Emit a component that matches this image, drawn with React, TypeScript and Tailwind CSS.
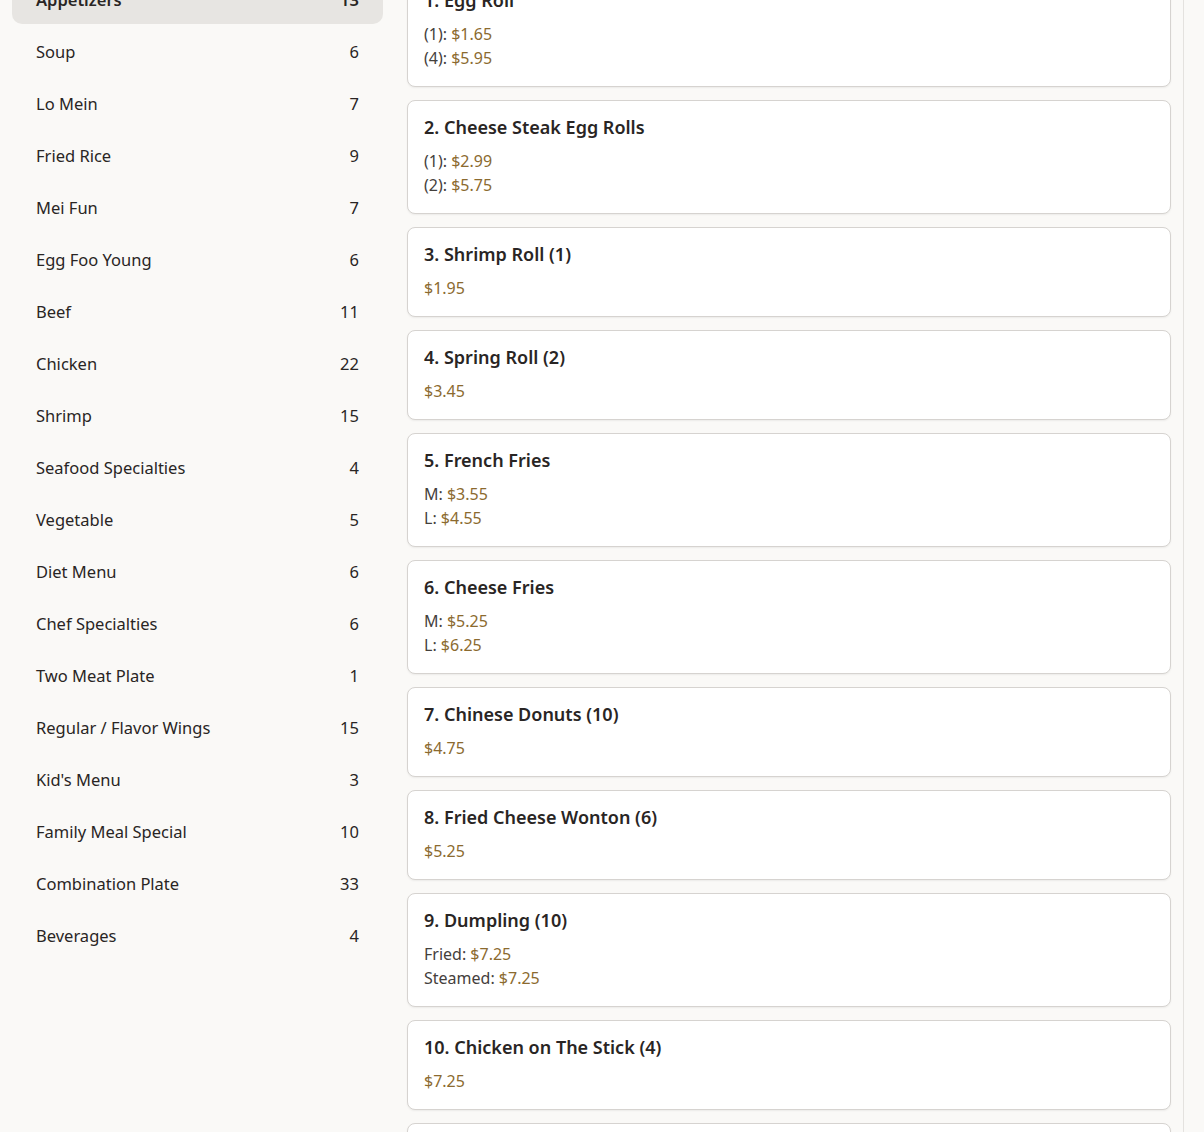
import React from 'react';

interface Category {
  name: string;
  count: number;
}

interface Price {
  label?: string;
  value: string;
}

interface MenuItem {
  title: string;
  prices: Price[];
}

const categories: Category[] = [
  { name: 'Appetizers', count: 13 },
  { name: 'Soup', count: 6 },
  { name: 'Lo Mein', count: 7 },
  { name: 'Fried Rice', count: 9 },
  { name: 'Mei Fun', count: 7 },
  { name: 'Egg Foo Young', count: 6 },
  { name: 'Beef', count: 11 },
  { name: 'Chicken', count: 22 },
  { name: 'Shrimp', count: 15 },
  { name: 'Seafood Specialties', count: 4 },
  { name: 'Vegetable', count: 5 },
  { name: 'Diet Menu', count: 6 },
  { name: 'Chef Specialties', count: 6 },
  { name: 'Two Meat Plate', count: 1 },
  { name: 'Regular / Flavor Wings', count: 15 },
  { name: "Kid's Menu", count: 3 },
  { name: 'Family Meal Special', count: 10 },
  { name: 'Combination Plate', count: 33 },
  { name: 'Beverages', count: 4 },
];

const items: MenuItem[] = [
  { title: '1. Egg Roll', prices: [{ label: '(1)', value: '$1.65' }, { label: '(4)', value: '$5.95' }] },
  { title: '2. Cheese Steak Egg Rolls', prices: [{ label: '(1)', value: '$2.99' }, { label: '(2)', value: '$5.75' }] },
  { title: '3. Shrimp Roll (1)', prices: [{ value: '$1.95' }] },
  { title: '4. Spring Roll (2)', prices: [{ value: '$3.45' }] },
  { title: '5. French Fries', prices: [{ label: 'M', value: '$3.55' }, { label: 'L', value: '$4.55' }] },
  { title: '6. Cheese Fries', prices: [{ label: 'M', value: '$5.25' }, { label: 'L', value: '$6.25' }] },
  { title: '7. Chinese Donuts (10)', prices: [{ value: '$4.75' }] },
  { title: '8. Fried Cheese Wonton (6)', prices: [{ value: '$5.25' }] },
  { title: '9. Dumpling (10)', prices: [{ label: 'Fried', value: '$7.25' }, { label: 'Steamed', value: '$7.25' }] },
  { title: '10. Chicken on The Stick (4)', prices: [{ value: '$7.25' }] },
  { title: '11. Crab Rangoon (6)', prices: [{ value: '$5.25' }] },
];

const App: React.FC = () => {
  return (
    <div
      className="flex h-[1132px] w-full overflow-hidden bg-[#faf9f7] text-[#292524]"
      style={{ fontFamily: '"Noto Sans", "Liberation Sans", sans-serif' }}
    >
      {/* Sidebar */}
      <aside className="w-[395px] shrink-0 px-3">
        <ul className="mt-[-24px] flex flex-col gap-1">
          {categories.map((c, i) => (
            <li
              key={c.name}
              className={
                i === 0
                  ? 'flex h-12 items-center justify-between rounded-[10px] bg-[#e7e5e2] px-6 text-[16.5px] font-semibold'
                  : 'flex h-12 items-center justify-between rounded-[10px] px-6 text-[16.5px]'
              }
            >
              <span>{c.name}</span>
              <span>{c.count}</span>
            </li>
          ))}
        </ul>
      </aside>

      {/* Menu items */}
      <main className="flex-1 border-r border-[#e4e2df] px-3">
        <div className="mt-[-27px] flex flex-col gap-[13px]">
          {items.map((item) => (
            <div
              key={item.title}
              className="rounded-lg border border-[#d6d3d0] bg-white p-4 shadow-[0_1px_2px_rgba(0,0,0,0.06)]"
            >
              <h3 className="text-[18px] font-semibold leading-5 text-[#292524]">{item.title}</h3>
              <div className="mt-3 flex flex-col">
                {item.prices.map((p, i) => (
                  <div key={i} className="text-[16px] leading-6 text-[#44403c]">
                    {p.label && <span>{p.label}: </span>}
                    <span className="text-[#8b6a2f]">{p.value}</span>
                  </div>
                ))}
              </div>
            </div>
          ))}
        </div>
      </main>
      <div className="w-5 shrink-0" />
    </div>
  );
};

export default App;
